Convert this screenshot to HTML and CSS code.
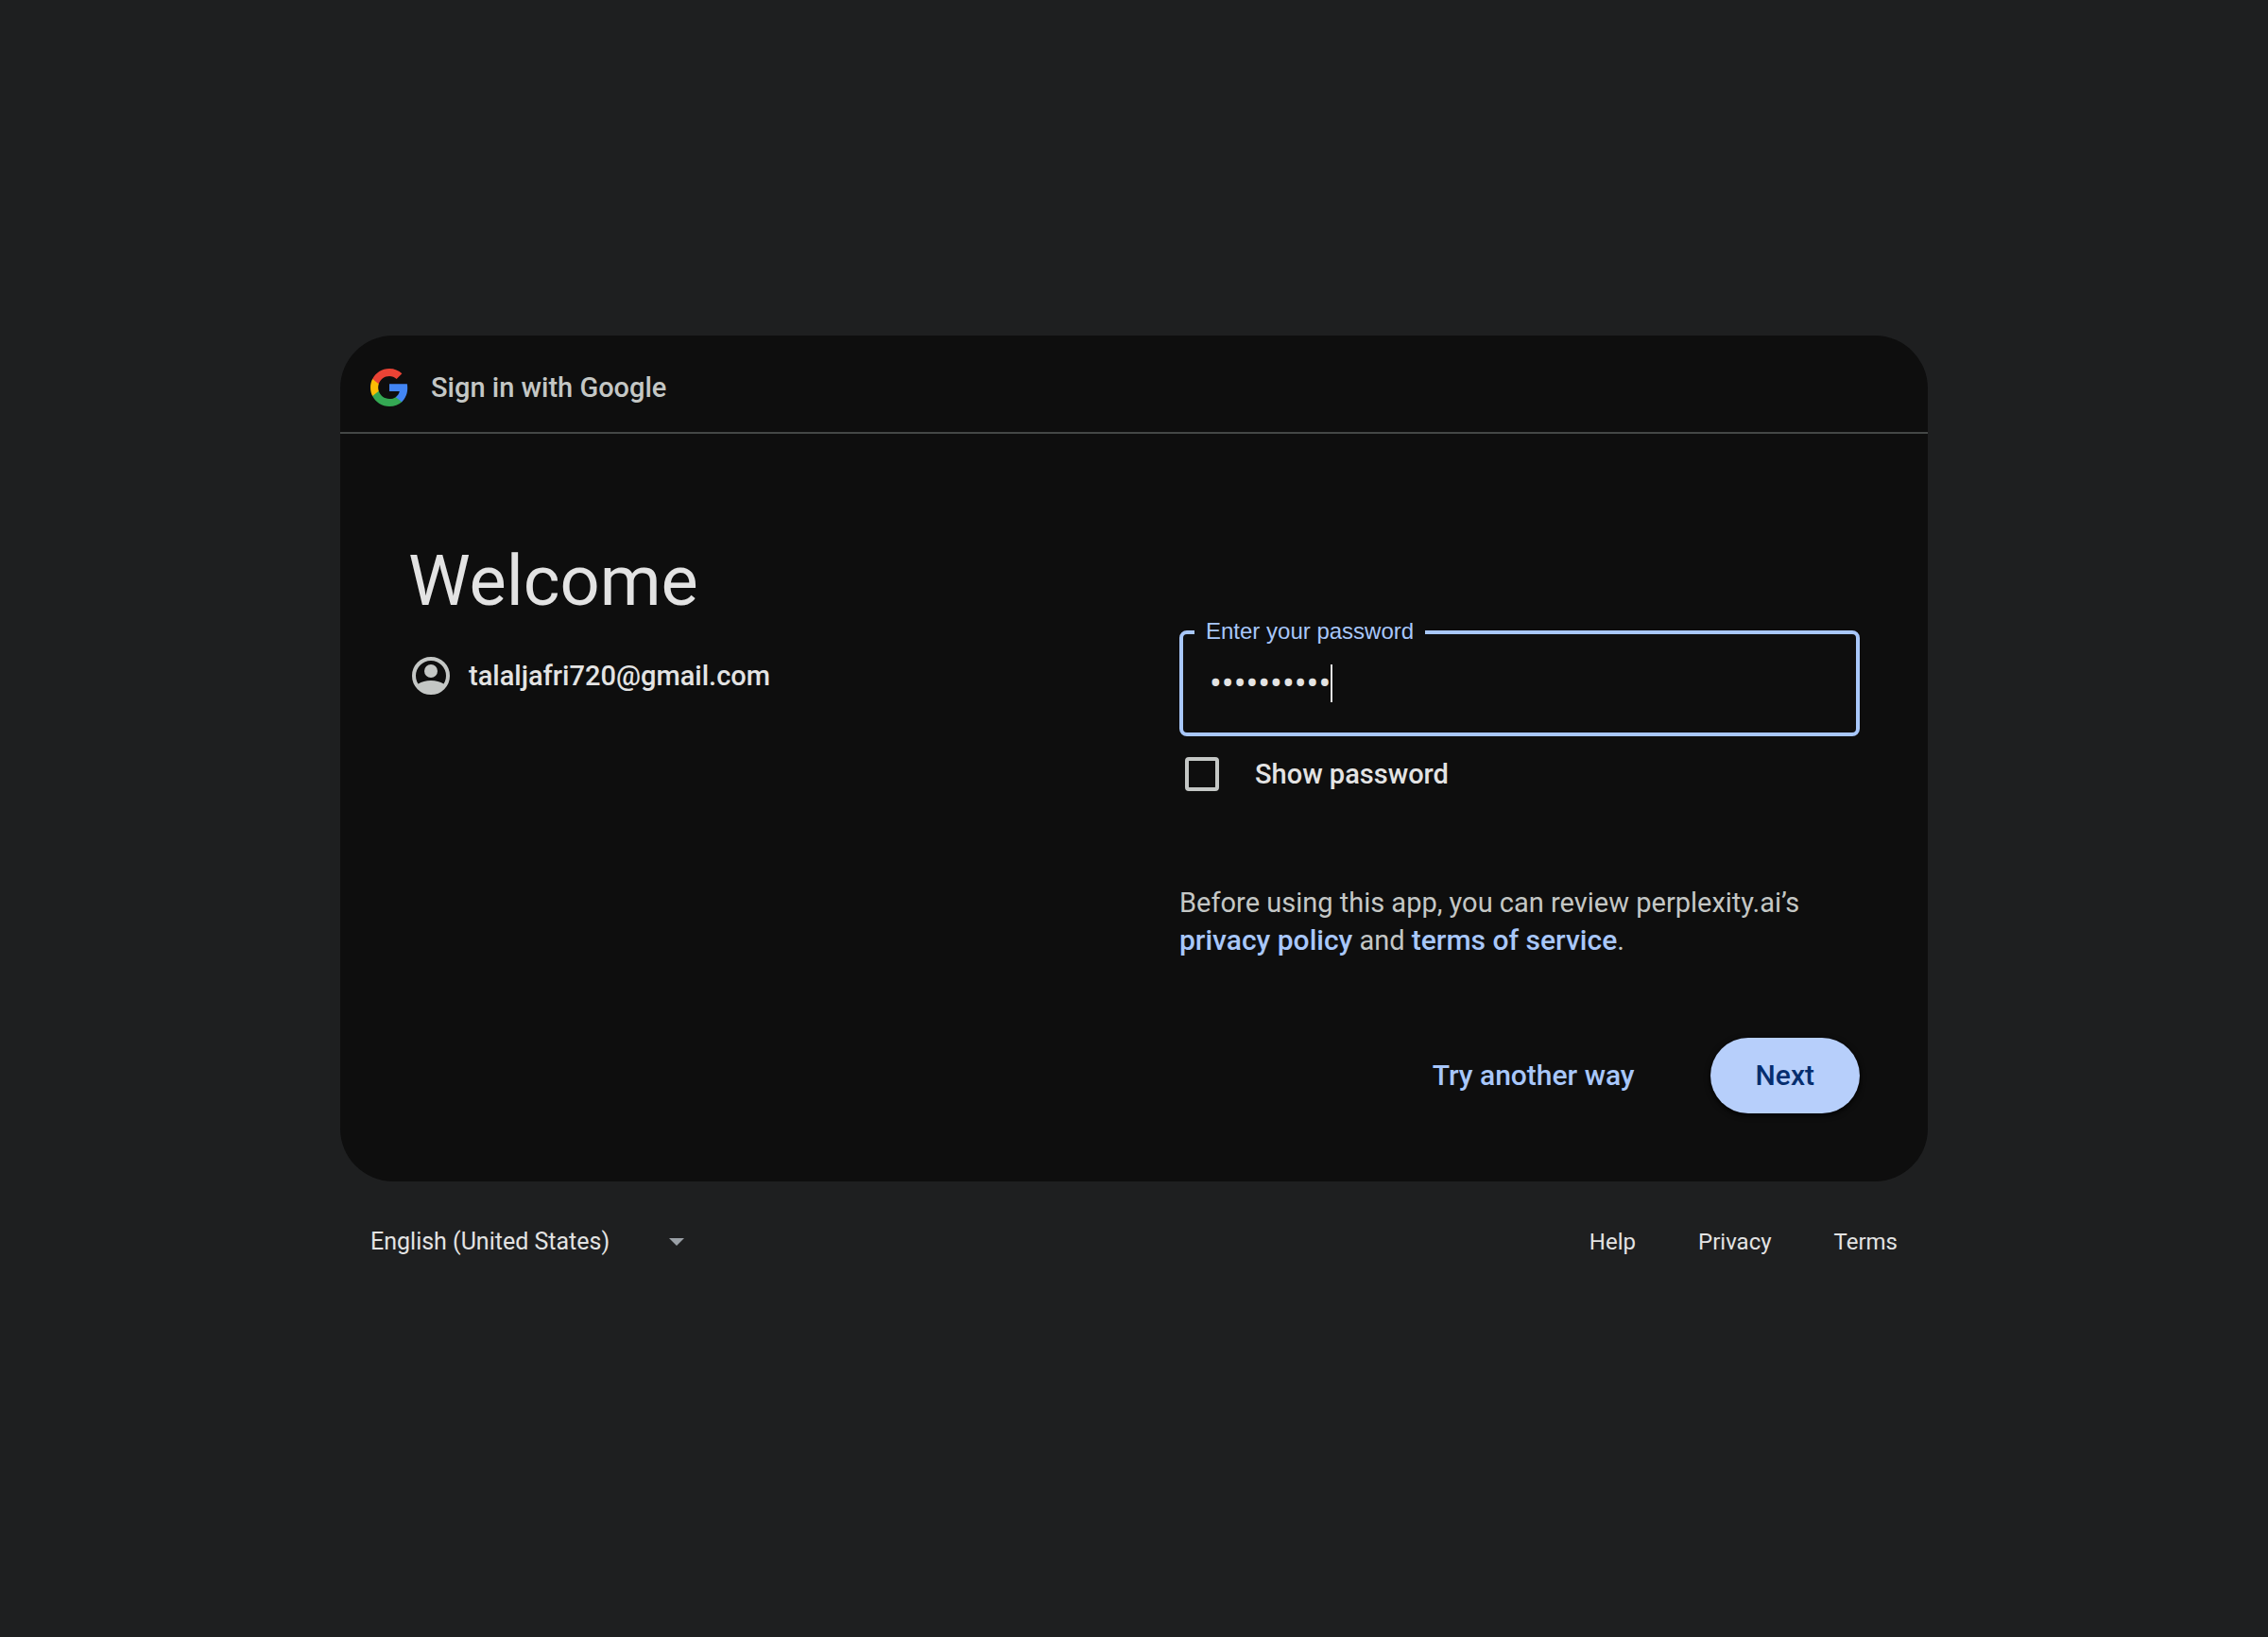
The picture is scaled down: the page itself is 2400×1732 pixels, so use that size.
FILE: index.html
```html
<!DOCTYPE html>
<html lang="en">
<head>
<meta charset="utf-8">
<meta name="viewport" content="width=device-width, initial-scale=1">
<title>Sign in - Google Accounts</title>
<link rel="stylesheet" href="styles.css">
</head>
<body>
<div class="page">
  <main class="card">
    <header class="card-header">
      <svg class="logo" viewBox="2 2 44 44" aria-hidden="true">
        <path fill="#4285F4" d="M45.12 24.5c0-1.56-.14-3.06-.4-4.5H24v8.51h11.84c-.51 2.75-2.06 5.08-4.39 6.64v5.52h7.11c4.16-3.83 6.56-9.47 6.56-16.17z"/>
        <path fill="#34A853" d="M24 46c5.94 0 10.92-1.97 14.56-5.33l-7.11-5.52c-1.97 1.32-4.49 2.1-7.45 2.1-5.73 0-10.58-3.87-12.31-9.07H4.34v5.7C7.96 41.07 15.4 46 24 46z"/>
        <path fill="#FBBC05" d="M11.69 28.18C11.25 26.86 11 25.45 11 24s.25-2.86.69-4.18v-5.7H4.34C2.85 17.09 2 20.45 2 24s.85 6.91 2.34 9.88l7.35-5.7z"/>
        <path fill="#EA4335" d="M24 10.75c3.23 0 6.13 1.11 8.41 3.29l6.31-6.31C34.91 4.18 29.93 2 24 2 15.4 2 7.96 6.93 4.34 14.12l7.35 5.7c1.73-5.2 6.58-9.07 12.31-9.07z"/>
      </svg>
      <span class="header-title">Sign in with Google</span>
    </header>
    <div class="card-body">
      <section class="intro">
        <h1 class="title">Welcome</h1>
        <button class="account" type="button">
          <svg class="avatar" viewBox="0 0 40 40" aria-hidden="true">
            <defs><clipPath id="disc"><circle cx="20" cy="20" r="18"/></clipPath></defs>
            <circle cx="20" cy="20" r="18" fill="none" stroke="currentColor" stroke-width="4"/>
            <circle cx="20" cy="15" r="7" fill="currentColor"/>
            <ellipse cx="20" cy="37" rx="19" ry="12" fill="currentColor" clip-path="url(#disc)"/>
          </svg>
          <span>talaljafri720@gmail.com</span>
        </button>
      </section>
      <form class="form">
        <div class="field">
          <label class="field-label" for="password">Enter your password</label>
          <input class="field-input" id="password" type="password" value="abcdefghij">
          <span class="caret"></span>
        </div>
        <div class="show-row">
          <input class="checkbox" id="show" type="checkbox">
          <label for="show">Show password</label>
        </div>
        <p class="notice">Before using this app, you can review perplexity.ai’s <a class="link" href="#privacy-policy">privacy policy</a> and <a class="link" href="#terms-of-service">terms of service</a>.</p>
        <div class="actions">
          <button class="button" type="button">Try another way</button>
          <button class="button button-primary" type="submit">Next</button>
        </div>
      </form>
    </div>
  </main>
  <footer class="footer">
    <div class="language">
      <select class="language-select" aria-label="Language">
        <option>English (United States)</option>
      </select>
      <svg class="language-arrow" viewBox="0 0 16 8" aria-hidden="true"><path fill="#9aa0a6" d="M0 0h16L8 8z"/></svg>
    </div>
    <nav class="footer-links">
      <a href="#help">Help</a>
      <a href="#privacy">Privacy</a>
      <a href="#terms">Terms</a>
    </nav>
  </footer>
</div>
</body>
</html>
```
FILE: styles.css
```css
* {
  box-sizing: border-box;
}

body {
  margin: 0;
  background: #1e1f20;
  color: #e3e3e3;
  font-family: Roboto, "Noto Sans", sans-serif;
  font-size: 29px;
  line-height: 40px;
}

button,
input,
select {
  margin: 0;
  padding: 0;
  border: 0;
  background: none;
  color: inherit;
  font: inherit;
}

a {
  color: inherit;
  text-decoration: none;
}

.page {
  display: flex;
  flex-direction: column;
  justify-content: center;
  width: 70%;
  min-height: 100vh;
  margin: 0 auto;
}

.card {
  border-radius: 56px;
  background: #0e0e0e;
}

.card-header {
  display: flex;
  align-items: center;
  gap: 24px;
  padding: 35px 32px 27px;
  border-bottom: 2px solid #444746;
  color: #c4c7c5;
  font-weight: 500;
}

.logo {
  width: 40px;
  height: 40px;
}

.card-body {
  display: grid;
  grid-template-columns: 1fr 1fr;
  gap: 96px;
  padding: 112px 72px 72px;
}

.title {
  margin: 0 0 24px;
  font-size: 74px;
  font-weight: 400;
  line-height: 88px;
}

.account {
  display: flex;
  align-items: center;
  gap: 20px;
  height: 64px;
  padding: 0 4px;
  font-weight: 500;
}

.avatar {
  width: 40px;
  height: 40px;
  color: #c4c7c5;
}

.form {
  padding-top: 96px;
}

.field {
  position: relative;
  display: flex;
  align-items: center;
  height: 112px;
  padding: 0 28px;
  border: 4px solid #a8c7fa;
  border-radius: 8px;
}

.field-label {
  position: absolute;
  top: -19px;
  left: 12px;
  padding: 0 12px;
  background: #0e0e0e;
  color: #a8c7fa;
  font-family: "Liberation Sans", Arial, sans-serif;
  font-size: 24px;
  line-height: 32px;
}

.field-input {
  field-sizing: content;
  outline: none;
  font-size: 38px;
}

.caret {
  width: 2px;
  height: 40px;
  background: #e3e3e3;
}

.show-row {
  display: flex;
  align-items: center;
  gap: 38px;
  height: 80px;
  padding-left: 6px;
  font-weight: 500;
}

.checkbox {
  appearance: none;
  width: 36px;
  height: 36px;
  border: 4px solid #c4c7c5;
  border-radius: 4px;
}

.checkbox:checked {
  background: #a8c7fa;
}

.notice {
  margin: 76px 0 0;
  color: #c4c7c5;
}

.link {
  color: #a8c7fa;
  font-size: 30px;
  font-weight: 500;
}

.actions {
  display: flex;
  justify-content: flex-end;
  gap: 56px;
  margin-top: 83px;
}

.button {
  height: 80px;
  padding: 0 24px;
  border-radius: 40px;
  color: #a8c7fa;
  font-size: 30px;
  font-weight: 500;
}

.button-primary {
  padding: 0 48px;
  background: #b7cffb;
  box-shadow: 0 2px 6px #000;
  color: #062e6f;
}

.footer {
  display: flex;
  justify-content: space-between;
  align-items: center;
  height: 128px;
  padding: 0 32px;
  font-size: 24px;
}

.language {
  position: relative;
}

.language-select {
  appearance: none;
  width: 332px;
  height: 48px;
  font-size: 25px;
}

.language-arrow {
  position: absolute;
  top: 20px;
  right: 0;
  width: 16px;
  height: 8px;
  pointer-events: none;
}

.footer-links {
  display: flex;
  gap: 66px;
}
```
